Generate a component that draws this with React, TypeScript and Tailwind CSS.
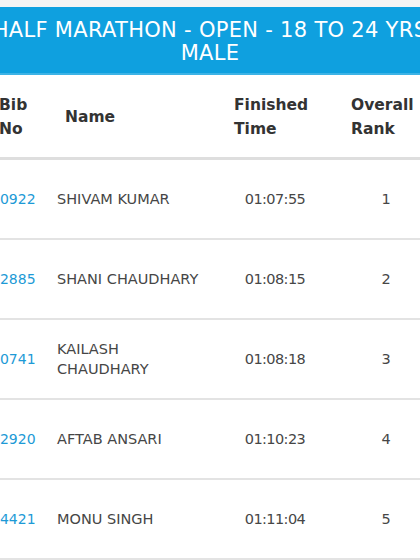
const rows = [
  { bib: "10922", name: "SHIVAM KUMAR", time: "01:07:55", rank: "1" },
  { bib: "12885", name: "SHANI CHAUDHARY", time: "01:08:15", rank: "2" },
  { bib: "10741", name: "KAILASH CHAUDHARY", time: "01:08:18", rank: "3" },
  { bib: "12920", name: "AFTAB ANSARI", time: "01:10:23", rank: "4" },
  { bib: "14421", name: "MONU SINGH", time: "01:11:04", rank: "5" },
];

export default function App() {
  return (
    <div className="w-[420px] h-[560px] overflow-hidden bg-white font-['DejaVu_Sans',sans-serif]">
      {/* Top strip */}
      <div className="h-[7px] bg-[#f4f4f4]" />

      {/* Banner */}
      <div className="h-[68px] pt-[3px] bg-[#0fa0df] border-b-2 border-[#3db3e6] flex flex-col items-center justify-center overflow-hidden">
        <p className="whitespace-nowrap text-white text-[21px] leading-[23px] tracking-[0.3px]">
          HALF MARATHON - OPEN - 18 TO 24 YRS
        </p>
        <p className="whitespace-nowrap text-white text-[21px] leading-[23px] tracking-[0.3px]">
          MALE
        </p>
      </div>

      {/* Table */}
      <div className="-ml-[10px] w-[450px]">
        {/* Header */}
        <div className="h-[85px] pt-[2px] flex items-center border-b-[3px] border-[#dedede] text-[#333] font-bold text-[15.5px] leading-[24px]">
          <div className="w-[75px] pl-[9px]">
            Bib
            <br />
            No
          </div>
          <div className="w-[169px]">Name</div>
          <div className="w-[117px]">
            Finished
            <br />
            Time
          </div>
          <div className="w-[89px]">
            Overall
            <br />
            Rank
          </div>
        </div>

        {/* Rows */}
        {rows.map((r) => (
          <div
            key={r.bib}
            className="h-[80px] flex items-center border-b-2 border-[#e3e3e3] text-[14.5px] leading-[20px] text-[#464646]"
          >
            <div className="w-[67px] pl-[1px] text-[#1d9ad6] text-[14px]">{r.bib}</div>
            <div className="w-[160px] pr-2">{r.name}</div>
            <div className="w-[116px] text-center tracking-[-0.6px]">{r.time}</div>
            <div className="w-[106px] text-center">{r.rank}</div>
          </div>
        ))}
      </div>
    </div>
  );
}
